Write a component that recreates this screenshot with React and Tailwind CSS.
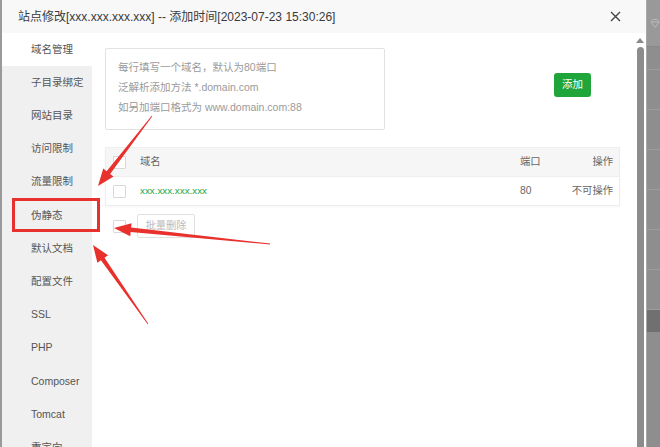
const CJK = { fontFamily: '"Liberation Sans", "Noto Sans CJK SC", sans-serif' };

const MENU = [
  "域名管理",
  "子目录绑定",
  "网站目录",
  "访问限制",
  "流量限制",
  "伪静态",
  "默认文档",
  "配置文件",
  "SSL",
  "PHP",
  "Composer",
  "Tomcat",
  "重定向",
];

// red annotation arrow: thin tail widening toward a triangular head
function arrowPoints([tx, ty], [hx, hy]) {
  const dx = hx - tx;
  const dy = hy - ty;
  const len = Math.hypot(dx, dy);
  const ux = dx / len;
  const uy = dy / len;
  const nx = -uy;
  const ny = ux;
  const headLen = 17;
  const headW = 6.5;
  const shaftW = 2.2;
  const bx = hx - ux * headLen;
  const by = hy - uy * headLen;
  const pts = [
    [tx + nx * 0.4, ty + ny * 0.4],
    [bx + nx * shaftW, by + ny * shaftW],
    [bx + nx * headW, by + ny * headW],
    [hx, hy],
    [bx - nx * headW, by - ny * headW],
    [bx - nx * shaftW, by - ny * shaftW],
    [tx - nx * 0.4, ty - ny * 0.4],
  ];
  return pts.map((p) => p.join(",")).join(" ");
}

function Checkbox() {
  return <span className="block w-[13px] h-[13px] border border-[#d9d9d9] bg-white rounded-[1px]" />;
}

export default function App() {
  return (
    <div className="relative w-[660px] h-[447px] overflow-hidden bg-white flex" style={CJK}>
      {/* modal */}
      <div className="w-[646px] h-full flex flex-col border-l-2 border-[#9a9a9a]">
        <div className="h-[33px] shrink-0 bg-[#f8f8f8] flex items-center pl-[16px] pr-[25px]">
          <span className="text-[12px] text-[#3a3a3a]">
            站点修改[xxx.xxx.xxx.xxx] -- 添加时间[2023-07-23 15:30:26]
          </span>
          <svg className="ml-auto" width="11" height="11" viewBox="0 0 11 11">
            <path d="M1 1L10 10M10 1L1 10" stroke="#444" strokeWidth="1.4" />
          </svg>
        </div>

        <div className="flex-1 flex min-h-0">
          {/* sidebar */}
          <div className="w-[90px] shrink-0 bg-[#f0f0f0] flex flex-col">
            {MENU.map((m, i) => (
              <div
                key={m}
                className={`h-[33.2px] shrink-0 flex items-center pl-[29px] text-[10.5px] text-[#555] ${
                  i === 0 ? "bg-white" : ""
                }`}
              >
                {m}
              </div>
            ))}
          </div>

          {/* content */}
          <div className="flex-1 pl-[13px] pr-[8px] pt-[15px]">
            <div className="flex">
              <div className="w-[280px] h-[82px] border border-[#e2e2e2] rounded-[2px] pl-[12px] pt-[8px] text-[10.5px] text-[#9a9a9a] leading-[20px]">
                <div>每行填写一个域名，默认为80端口</div>
                <div>泛解析添加方法 *.domain.com</div>
                <div>如另加端口格式为 www.domain.com:88</div>
              </div>
              <button className="ml-[169px] mt-[25px] w-[37px] h-[24px] bg-[#20a53a] rounded-[3px] text-white text-[10.5px]">
                添加
              </button>
            </div>

            <div className="mt-[17px] w-[515px] border border-[#eeeeee] shadow-[0_1px_2px_rgba(0,0,0,0.04)] text-[10.3px] text-[#666]">
              <div className="h-[29px] bg-[#f6f6f6] flex items-center border-b border-[#eeeeee]">
                <span className="w-[34px] shrink-0 pl-[7px]">
                  <Checkbox />
                </span>
                <span className="w-[380px] shrink-0">域名</span>
                <span>端口</span>
                <span className="ml-auto mr-[6px]">操作</span>
              </div>
              <div className="h-[28px] flex items-center">
                <span className="w-[34px] shrink-0 pl-[7px]">
                  <Checkbox />
                </span>
                <span className="w-[380px] shrink-0 text-[#20a53a] text-[9.8px]">xxx.xxx.xxx.xxx</span>
                <span>80</span>
                <span className="ml-auto mr-[6px]">不可操作</span>
              </div>
            </div>

            <div className="mt-[8px] flex items-center">
              <span className="ml-[8px]">
                <Checkbox />
              </span>
              <button className="ml-[11px] w-[58px] h-[24px] border border-[#e0e0e0] rounded-[2px] text-[10.3px] text-[#bbb] bg-white">
                批量删除
              </button>
            </div>
          </div>

          {/* scrollbar */}
          <div className="w-[18px] shrink-0 flex flex-col items-center pl-[6px] pt-[5px]">
            <svg width="8" height="5" viewBox="0 0 8 5">
              <path d="M0 5L4 0L8 5Z" fill="#8a8a8a" />
            </svg>
            <div className="mt-[4px] w-[7px] flex-1 bg-[#8c8c8c] rounded-t-full" />
          </div>
        </div>
      </div>

      {/* dimmed page behind the modal */}
      <div className="flex-1 bg-[#8e8e8e] flex flex-col border-l border-[#a8a8a8]">
        <div className="h-[47px] bg-[#999] border-b border-[#888] flex items-center pl-[3px]">
          <svg width="10" height="9" viewBox="0 0 10 9">
            <path d="M1 3L3 0.5H7L9 3L5 8.5Z M1 3H9" stroke="#c0c0c0" strokeWidth="0.8" fill="none" />
          </svg>
        </div>
        <div className="h-[23px] border-b border-[#9c9c9c]" />
        <div className="h-[40px] border-b border-[#9c9c9c]" />
        <div className="h-[40px] border-b border-[#9c9c9c]" />
        <div className="h-[40px] border-b border-[#9c9c9c]" />
        <div className="h-[40px] border-b border-[#9c9c9c]" />
        <div className="h-[40px] border-b border-[#9c9c9c]" />
        <div className="h-[40px] border-b border-[#9c9c9c]" />
        <div className="h-[22px] bg-[#707070]" />
        <div className="flex-1" />
      </div>

      {/* annotation: highlight box */}
      <div className="absolute left-[12px] top-[198px] w-[88px] h-[34px] border-[3px] border-[#e8302c]" />

      {/* annotation: arrows */}
      <svg className="absolute inset-0 pointer-events-none" width="660" height="447">
        <polygon points={arrowPoints([152, 116], [98, 186])} fill="#e8302c" />
        <polygon points={arrowPoints([270, 244], [114, 228])} fill="#e8302c" />
        <polygon points={arrowPoints([148, 324], [93, 245])} fill="#e8302c" />
      </svg>
    </div>
  );
}
